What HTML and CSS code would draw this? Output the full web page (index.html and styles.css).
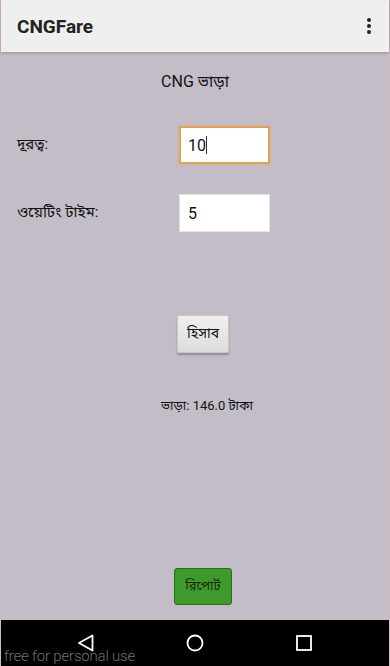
FILE: index.html
```
<!DOCTYPE html>
<html lang="bn">
<head>
    <meta charset="UTF-8">
    <meta name="viewport" content="width=device-width, initial-scale=1.0">
    <title>CNGFare</title>
    <link rel="stylesheet" href="styles.css">
</head>
<body>
    <div class="phone">
        <!-- App bar -->
        <header class="app-bar">
            <span class="app-title">CNGFare</span>
            <svg class="menu-icon" width="6" height="18" viewBox="0 0 6 18">
                <circle cx="3" cy="3" r="2" fill="#222"/>
                <circle cx="3" cy="9" r="2" fill="#222"/>
                <circle cx="3" cy="15" r="2" fill="#222"/>
            </svg>
        </header>

        <main class="content">
            <h1 class="page-title">CNG ভাড়া</h1>

            <div class="form-row">
                <label>দূরত্ব:</label>
                <div class="field focused">10<span class="caret"></span></div>
            </div>
            <div class="form-row">
                <label>ওয়েটিং টাইম:</label>
                <div class="field">5</div>
            </div>

            <div class="calc-wrap">
                <button class="calc-button">হিসাব</button>
            </div>

            <p class="result">ভাড়া: 146.0 টাকা</p>

            <div class="report-wrap">
                <button class="report-button">রিপোর্ট</button>
            </div>
        </main>

        <!-- Navigation bar -->
        <nav class="nav-bar">
            <svg width="18" height="18" viewBox="0 0 18 18">
                <path d="M15.5 1.5 L2 9 L15.5 16.5 Z" fill="none" stroke="#fff" stroke-width="1.8" stroke-linejoin="round"/>
            </svg>
            <svg width="18" height="18" viewBox="0 0 18 18">
                <circle cx="9" cy="9" r="7.5" fill="none" stroke="#fff" stroke-width="1.8"/>
            </svg>
            <svg width="18" height="18" viewBox="0 0 18 18">
                <rect x="2" y="2" width="14" height="14" fill="none" stroke="#fff" stroke-width="1.8"/>
            </svg>
            <span class="watermark">free for personal use</span>
        </nav>
    </div>
</body>
</html>
```
FILE: styles.css
```
* {
    box-sizing: border-box;
    margin: 0;
    padding: 0;
}

body {
    font-family: Roboto, 'Noto Sans', 'Noto Sans Bengali', 'Lohit Bengali', sans-serif;
    background: #c3bdc7;
}

.phone {
    width: 390px;
    height: 666px;
    display: flex;
    flex-direction: column;
    border-left: 1px solid #d8b8c0;
    border-right: 1px solid #d8b8c0;
}

/* App bar */
.app-bar {
    height: 52px;
    background: #efefef;
    display: flex;
    align-items: center;
    justify-content: space-between;
    padding: 0 17px 0 16px;
    box-shadow: 0 1px 3px rgba(0, 0, 0, 0.25);
    position: relative;
    z-index: 1;
}

.app-title {
    font-size: 19px;
    font-weight: bold;
    color: #222;
}

/* Content */
.content {
    flex: 1;
    background: #c3bdc7;
    display: flex;
    flex-direction: column;
}

.page-title {
    font-size: 16px;
    font-weight: normal;
    color: #111;
    text-align: center;
    margin-top: 20px;
}

.form-row {
    display: flex;
    align-items: center;
    padding-left: 16px;
    height: 38px;
}

.form-row:nth-of-type(1) {
    margin-top: 32px;
}

.form-row + .form-row {
    margin-top: 30px;
}

.form-row label {
    width: 162px;
    font-size: 15px;
    color: #111;
}

.field {
    width: 91px;
    height: 38px;
    background: #fff;
    font-size: 16px;
    color: #111;
    padding: 0 8px;
    display: flex;
    align-items: center;
    border: 1px solid #e6e2e8;
}

.field.focused {
    border: 2px solid #e8a050;
    padding-left: 7px;
    box-shadow: 0 0 2px rgba(232, 160, 80, 0.6);
}

.caret {
    display: inline-block;
    width: 1px;
    height: 18px;
    background: #333;
}

.calc-wrap {
    display: flex;
    justify-content: center;
    margin-top: 83px;
    padding-left: 16px;
}

.calc-button {
    width: 52px;
    height: 38px;
    font-family: inherit;
    font-size: 14px;
    color: #111;
    background: linear-gradient(#f0f0f0, #dcdcdc);
    border: 1px solid #c8c8c8;
    border-radius: 2px;
    box-shadow: 0 2px 2px rgba(0, 0, 0, 0.25);
}

.result {
    text-align: center;
    font-size: 13px;
    color: #111;
    margin-top: 45px;
    padding-left: 24px;
}

.report-wrap {
    margin-top: auto;
    margin-bottom: 15px;
    display: flex;
    justify-content: center;
    padding-left: 16px;
}

.report-button {
    width: 58px;
    height: 37px;
    font-family: inherit;
    font-size: 13px;
    color: #1a2a10;
    background: #3e9a2c;
    border: 1px solid #2c6a20;
    border-radius: 3px;
}

/* Navigation bar */
.nav-bar {
    height: 46px;
    background: #000;
    display: flex;
    align-items: center;
    justify-content: center;
    gap: 91px;
    position: relative;
}

.watermark {
    position: absolute;
    left: 3px;
    bottom: 1px;
    font-size: 15px;
    font-weight: 300;
    letter-spacing: -0.2px;
    color: #707070;
}
```
